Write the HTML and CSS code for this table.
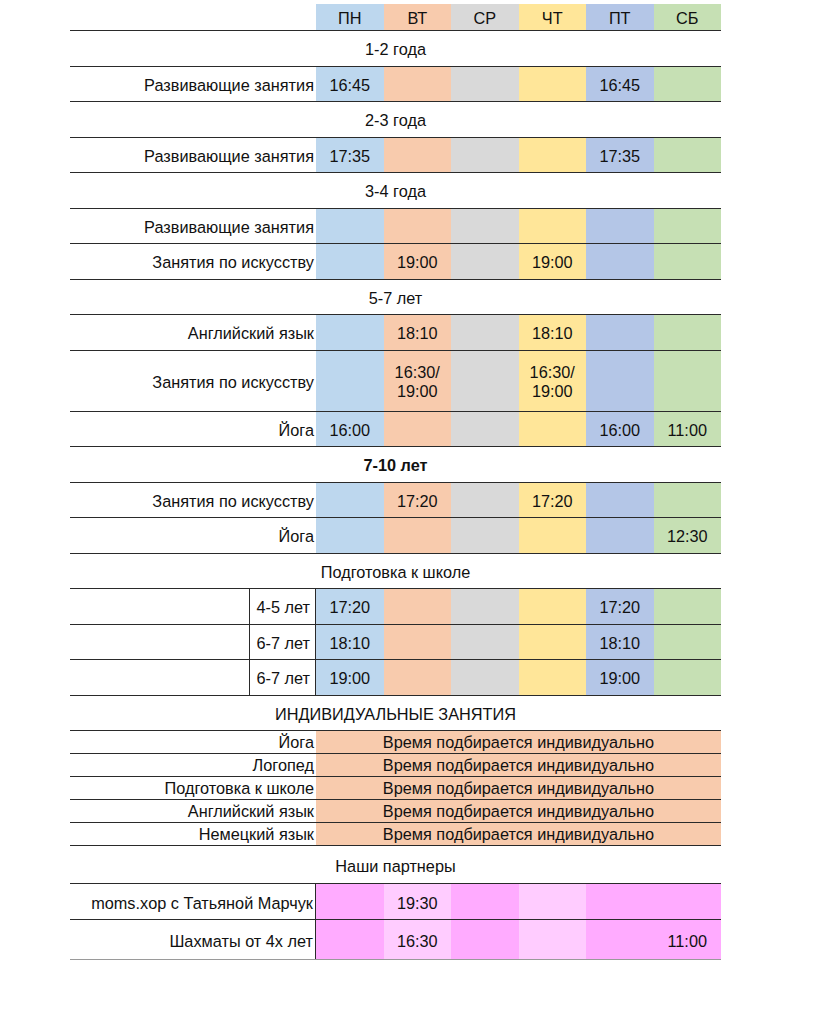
FILE: index.html
```html
<!DOCTYPE html>
<html lang="ru">
<head>
<meta charset="utf-8">
<title>Расписание</title>
<link rel="stylesheet" href="styles.css">
</head>
<body>
<div class="sheet">
  <div class="row head">
    <div class="lbl"></div>
    <div class="c mon">ПН</div><div class="c tue">ВТ</div><div class="c wed">СР</div><div class="c thu">ЧТ</div><div class="c fri">ПТ</div><div class="c sat">СБ</div>
  </div>

  <div class="row sec">1-2 года</div>
  <div class="row">
    <div class="lbl">Развивающие занятия</div>
    <div class="c mon">16:45</div><div class="c tue"></div><div class="c wed"></div><div class="c thu"></div><div class="c fri">16:45</div><div class="c sat"></div>
  </div>

  <div class="row sec">2-3 года</div>
  <div class="row">
    <div class="lbl">Развивающие занятия</div>
    <div class="c mon">17:35</div><div class="c tue"></div><div class="c wed"></div><div class="c thu"></div><div class="c fri">17:35</div><div class="c sat"></div>
  </div>

  <div class="row sec">3-4 года</div>
  <div class="row">
    <div class="lbl">Развивающие занятия</div>
    <div class="c mon"></div><div class="c tue"></div><div class="c wed"></div><div class="c thu"></div><div class="c fri"></div><div class="c sat"></div>
  </div>
  <div class="row">
    <div class="lbl">Занятия по искусству</div>
    <div class="c mon"></div><div class="c tue">19:00</div><div class="c wed"></div><div class="c thu">19:00</div><div class="c fri"></div><div class="c sat"></div>
  </div>

  <div class="row sec">5-7 лет</div>
  <div class="row">
    <div class="lbl">Английский язык</div>
    <div class="c mon"></div><div class="c tue">18:10</div><div class="c wed"></div><div class="c thu">18:10</div><div class="c fri"></div><div class="c sat"></div>
  </div>
  <div class="row tall">
    <div class="lbl">Занятия по искусству</div>
    <div class="c mon"></div><div class="c tue">16:30/<br>19:00</div><div class="c wed"></div><div class="c thu">16:30/<br>19:00</div><div class="c fri"></div><div class="c sat"></div>
  </div>
  <div class="row">
    <div class="lbl">Йога</div>
    <div class="c mon">16:00</div><div class="c tue"></div><div class="c wed"></div><div class="c thu"></div><div class="c fri">16:00</div><div class="c sat">11:00</div>
  </div>

  <div class="row sec bold">7-10 лет</div>
  <div class="row">
    <div class="lbl">Занятия по искусству</div>
    <div class="c mon"></div><div class="c tue">17:20</div><div class="c wed"></div><div class="c thu">17:20</div><div class="c fri"></div><div class="c sat"></div>
  </div>
  <div class="row">
    <div class="lbl">Йога</div>
    <div class="c mon"></div><div class="c tue"></div><div class="c wed"></div><div class="c thu"></div><div class="c fri"></div><div class="c sat">12:30</div>
  </div>

  <div class="row sec">Подготовка к школе</div>
  <div class="row split">
    <div class="lbl-a"></div><div class="lbl-b">4-5 лет</div>
    <div class="c mon">17:20</div><div class="c tue"></div><div class="c wed"></div><div class="c thu"></div><div class="c fri">17:20</div><div class="c sat"></div>
  </div>
  <div class="row split">
    <div class="lbl-a"></div><div class="lbl-b">6-7 лет</div>
    <div class="c mon">18:10</div><div class="c tue"></div><div class="c wed"></div><div class="c thu"></div><div class="c fri">18:10</div><div class="c sat"></div>
  </div>
  <div class="row split">
    <div class="lbl-a"></div><div class="lbl-b">6-7 лет</div>
    <div class="c mon">19:00</div><div class="c tue"></div><div class="c wed"></div><div class="c thu"></div><div class="c fri">19:00</div><div class="c sat"></div>
  </div>

  <div class="row sec">ИНДИВИДУАЛЬНЫЕ ЗАНЯТИЯ</div>
  <div class="row ind"><div class="lbl">Йога</div><div class="c span">Время подбирается индивидуально</div></div>
  <div class="row ind"><div class="lbl">Логопед</div><div class="c span">Время подбирается индивидуально</div></div>
  <div class="row ind"><div class="lbl">Подготовка к школе</div><div class="c span">Время подбирается индивидуально</div></div>
  <div class="row ind"><div class="lbl">Английский язык</div><div class="c span">Время подбирается индивидуально</div></div>
  <div class="row ind"><div class="lbl">Немецкий язык</div><div class="c span">Время подбирается индивидуально</div></div>

  <div class="row sec partners">Наши партнеры</div>
  <div class="row partner">
    <div class="lbl ruled">moms.xop с Татьяной Марчук</div>
    <div class="c pk"></div><div class="c pl">19:30</div><div class="c pk"></div><div class="c pl"></div><div class="c pk"></div><div class="c pk"></div>
  </div>
  <div class="row partner last">
    <div class="lbl ruled">Шахматы от 4х лет</div>
    <div class="c pk"></div><div class="c pl">16:30</div><div class="c pk"></div><div class="c pl"></div><div class="c pk"></div><div class="c pk">11:00</div>
  </div>
</div>
</body>
</html>
```

FILE: styles.css
```css
* { box-sizing: border-box; }

html, body {
  margin: 0;
  padding: 0;
  background: #ffffff;
}

body {
  font-family: "Liberation Sans", Arial, sans-serif;
  font-size: 16.3px;
  color: #111111;
}

.sheet {
  width: 651px;
  margin-left: 70px;
  padding-top: 4px;
  display: flex;
  flex-direction: column;
}

.row {
  display: grid;
  grid-template-columns: 246px repeat(6, 67.5px);
  height: 35.5px;
  border-bottom: 1px solid #2a2a2a;
}

.row.head { height: 27px; }
.row.tall { height: 61px; }

.lbl {
  display: flex;
  align-items: center;
  justify-content: flex-end;
  padding: 3px 2px 0 0;
  white-space: nowrap;
}

.c {
  display: flex;
  align-items: center;
  justify-content: center;
  text-align: center;
  line-height: 19px;
  padding-top: 3px;
}

.head .c { padding-top: 2px; }

.sec {
  display: flex;
  align-items: center;
  justify-content: center;
  padding-top: 3px;
}

.bold { font-weight: bold; }

.split {
  grid-template-columns: 180px 66px repeat(6, 67.5px);
}

.lbl-a { border-right: 1px solid #2a2a2a; }

.lbl-b {
  display: flex;
  align-items: center;
  justify-content: flex-end;
  padding: 3px 5px 0 0;
  border-right: 1px solid #2a2a2a;
}

.ind { height: 23px; }
.ind .lbl, .ind .c { padding-top: 1px; }
.ind .span { grid-column: 2 / span 6; background: #f8cbad; }

.partners { height: 38px; }
.partner { height: 36px; }
.partner.last { height: 40px; border-bottom-color: #9a9a9a; }
.ruled { border-right: 1px solid #2a2a2a; }

.mon { background: #bdd7ee; }
.tue { background: #f8cbad; }
.wed { background: #d9d9d9; }
.thu { background: #ffe699; }
.fri { background: #b4c6e7; }
.sat { background: #c6e0b4; }
.pk { background: #ffabff; }
.pl { background: #ffccff; }
```
